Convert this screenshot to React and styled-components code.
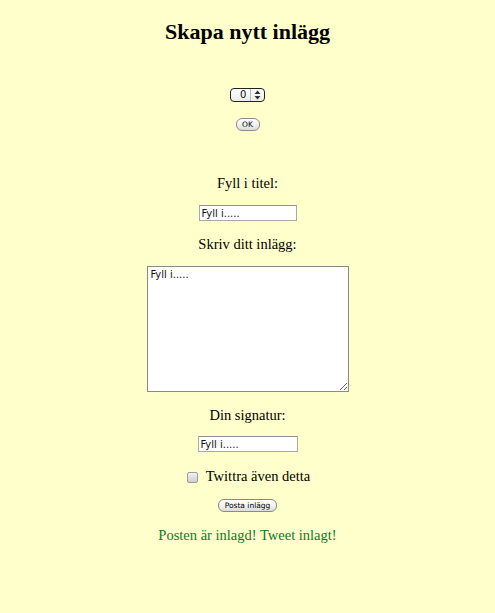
import React from 'react'
import styled, { createGlobalStyle } from 'styled-components'

//-----------------------------------------------------------------------------
// Global
//-----------------------------------------------------------------------------
const GlobalStyle = createGlobalStyle`
  html, body {
    margin: 0;
    padding: 0;
    background: #ffffcc;
  }
  body {
    font-family: "Liberation Serif", "Times New Roman", serif;
    color: #000;
  }
`

//-----------------------------------------------------------------------------
// Component
//-----------------------------------------------------------------------------
const App = () => {
  return (
    <>
      <GlobalStyle />
      <Page>
        <Title>Skapa nytt inlägg</Title>

        <SelectWrap>
          <Select defaultValue="0">
            <option value="0">0</option>
            <option value="1">1</option>
            <option value="2">2</option>
          </Select>
          <SelectArrows>
            <svg width="7" height="10" viewBox="0 0 7 10">
              <path d="M3.5 0.5 L6.5 4 L0.5 4 Z" fill="#333" />
              <path d="M3.5 9.5 L6.5 6 L0.5 6 Z" fill="#333" />
            </svg>
          </SelectArrows>
        </SelectWrap>

        <MacButton top={16} width={24}>OK</MacButton>

        <Label top={43}>Fyll i titel:</Label>
        <TextInput top={13} width={98} defaultValue="Fyll i....." />

        <Label top={14}>Skriv ditt inlägg:</Label>
        <TextArea defaultValue="Fyll i....." />

        <Label top={14}>Din signatur:</Label>
        <TextInput top={12} width={100} defaultValue="Fyll i....." />

        <CheckRow>
          <CheckBox type="checkbox" id="tweet" />
          <CheckLabel htmlFor="tweet">Twittra även detta</CheckLabel>
        </CheckRow>

        <MacButton top={14} width={59}>Posta inlägg</MacButton>

        <Status>Posten är inlagd! Tweet inlagt!</Status>
      </Page>
    </>
  )
}

//-----------------------------------------------------------------------------
// Styled Components
//-----------------------------------------------------------------------------
const Page = styled.div`
  width: 495px;
  min-height: 613px;
  display: flex;
  flex-direction: column;
  align-items: center;
  padding-top: 19px;
  box-sizing: border-box;
`

const Title = styled.h1`
  margin: 0;
  font-size: 22px;
  line-height: 26px;
  font-weight: bold;
`

const SelectWrap = styled.div`
  position: relative;
  margin-top: 43px;
  width: 35px;
  height: 14px;
`

const Select = styled.select`
  display: block;
  appearance: none;
  -webkit-appearance: none;
  box-sizing: border-box;
  width: 35px;
  height: 14px;
  margin: 0;
  padding: 0 0 0 9px;
  border: 1px solid #222;
  border-radius: 4px;
  background: linear-gradient(#ffffff, #ececec);
  font-family: "DejaVu Sans", sans-serif;
  font-size: 10px;
  line-height: 12px;
  color: #0a0a30;
  outline: none;
`

const SelectArrows = styled.span`
  position: absolute;
  top: 1px;
  right: 1px;
  width: 13px;
  height: 12px;
  border-left: 1px solid #b8b8b8;
  display: flex;
  align-items: center;
  justify-content: center;
  pointer-events: none;
`

const MacButton = styled.button`
  box-sizing: border-box;
  margin: ${p => p.top}px 0 0 0;
  width: ${p => p.width}px;
  height: 13px;
  padding: 0;
  border: 1px solid #8a8a8a;
  border-radius: 6px;
  background: linear-gradient(#ffffff 0%, #f2f2f2 50%, #dcdcdc 100%);
  font-family: "DejaVu Sans", sans-serif;
  font-size: 7.5px;
  line-height: 11px;
  color: #000;
`

const Label = styled.div`
  margin-top: ${p => p.top}px;
  font-size: 14.5px;
  line-height: 18px;
`

const TextInput = styled.input`
  box-sizing: border-box;
  margin: ${p => p.top}px 0 0 0;
  width: ${p => p.width}px;
  height: 16px;
  padding: 0 2px;
  border: 1px solid #a9a9a9;
  border-top-color: #8f8f8f;
  background: #fff;
  font-family: "DejaVu Sans", sans-serif;
  font-size: 10px;
  color: #111;
  outline: none;
`

const TextArea = styled.textarea`
  box-sizing: border-box;
  margin: 13px 0 0 0;
  width: 202px;
  height: 126px;
  padding: 2px 3px;
  border: 1px solid #8a8a8a;
  background: #fff;
  font-family: "DejaVu Sans", sans-serif;
  font-size: 10px;
  color: #111;
  outline: none;
`

const CheckRow = styled.div`
  margin-top: 15px;
  height: 18px;
  display: flex;
  align-items: center;
  gap: 8px;
  padding-left: 2px;
`

const CheckBox = styled.input`
  appearance: none;
  -webkit-appearance: none;
  box-sizing: border-box;
  margin: 2px 0 0 0;
  width: 11px;
  height: 11px;
  border: 1px solid #9c9c9c;
  border-radius: 2px;
  background: linear-gradient(#f2f2f2, #cfcfcf);
`

const CheckLabel = styled.label`
  font-size: 14.5px;
  line-height: 18px;
`

const Status = styled.div`
  margin-top: 14px;
  font-size: 14.5px;
  line-height: 18px;
  color: #0b7a2b;
`

export default App
